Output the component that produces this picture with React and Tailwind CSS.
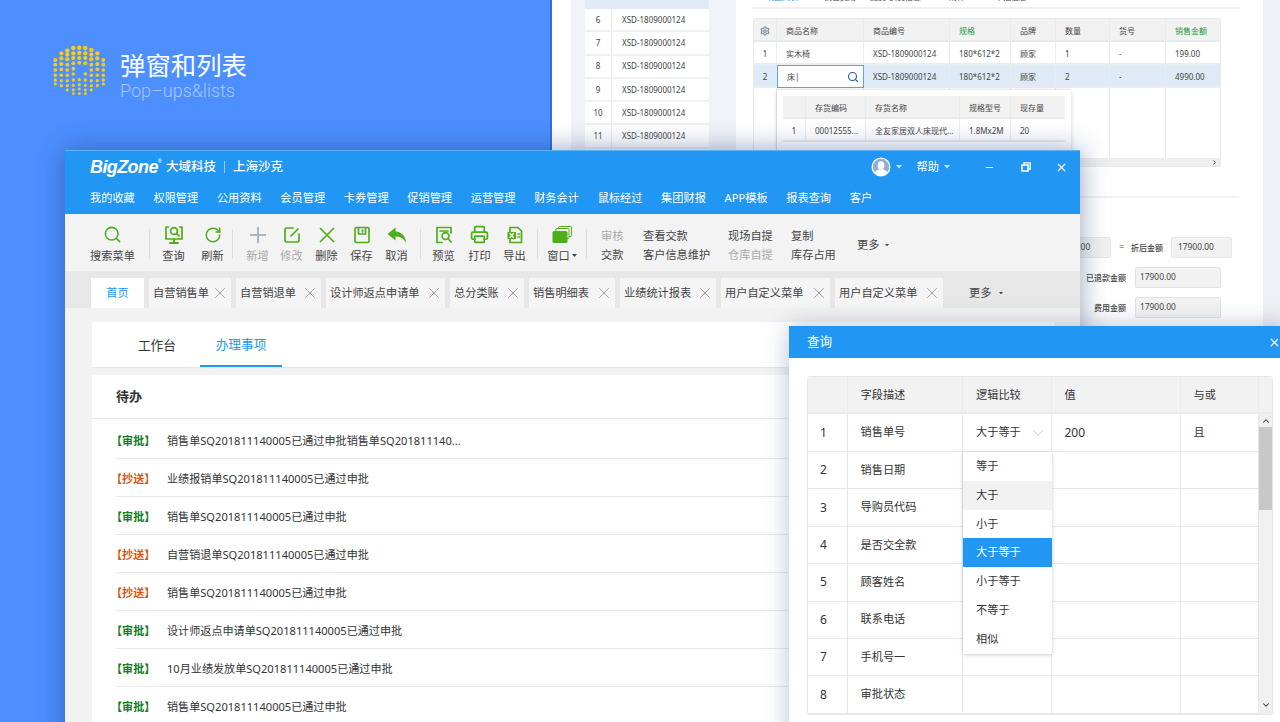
import { Search, RotateCw, Printer, X, Minus, ChevronUp, ChevronDown, ChevronRight, Settings } from "lucide-react";

const GREEN = "#4fad1a";

const LOGO_COLS = [
  [78, 92, 108, 124, 138, 150],
  [58, 73, 90, 106, 124, 140, 155],
  [50, 62, 76, 92, 108, 124, 140, 155, 168],
  [42, 58, 72, 88, 104, 120, 138, 154, 168, 179],
  [41, 57, 72, 86, 137, 152, 165, 179],
  [42, 58, 72, 88, 120, 138, 154, 168, 179],
  [48, 62, 76, 92, 108, 124, 140, 155, 168],
  [58, 73, 90, 106, 124, 140, 155],
  [78, 92, 108, 124, 138, 150],
];

const NAV = ["我的收藏", "权限管理", "公用资料", "会员管理", "卡券管理", "促销管理", "运营管理", "财务会计", "鼠标经过", "集团财报", "APP模板", "报表查询", "客户"];

const TABS = [
  { label: "自营销售单", w: "w-[82px]" },
  { label: "自营销退单", w: "w-[85px]" },
  { label: "设计师返点申请单", w: "w-[119px]" },
  { label: "总分类账", w: "w-[74px]" },
  { label: "销售明细表", w: "w-[86px]" },
  { label: "业绩统计报表", w: "w-[96px]" },
  { label: "用户自定义菜单", w: "w-[109px]" },
  { label: "用户自定义菜单", w: "w-[108px]" },
];

const TODOS = [
  { tag: "审批", text: "销售单SQ201811140005已通过申批销售单SQ201811140..." },
  { tag: "抄送", text: "业绩报销单SQ201811140005已通过申批" },
  { tag: "审批", text: "销售单SQ201811140005已通过申批" },
  { tag: "抄送", text: "自营销退单SQ201811140005已通过申批" },
  { tag: "抄送", text: "销售单SQ201811140005已通过申批" },
  { tag: "审批", text: "设计师返点申请单SQ201811140005已通过申批" },
  { tag: "审批", text: "10月业绩发放单SQ201811140005已通过申批" },
  { tag: "审批", text: "销售单SQ201811140005已通过申批" },
];

const FIELDS = ["销售单号", "销售日期", "导购员代码", "是否交全款", "顾客姓名", "联系电话", "手机号一", "审批状态"];

const OPTIONS = [
  { label: "等于" },
  { label: "大于", cls: "bg-[#f2f2f2]" },
  { label: "小于" },
  { label: "大于等于", cls: "bg-[#2196f3] text-white" },
  { label: "小于等于" },
  { label: "不等于" },
  { label: "相似" },
];

function Logo() {
  return (
    <svg width="54" height="54" viewBox="0 0 54 54" className="shrink-0">
      {LOGO_COLS.map((col, i) =>
        col.map((y) => (
          <circle key={i + "-" + y} cx={3.3 + i * 6} cy={y / 3 - 11} r={2.5 - (y / 180) * 1.1} fill="#ffcc00" />
        ))
      )}
    </svg>
  );
}

function Caret({ color = "#fff", size = 5 }) {
  return (
    <svg width={size} height={size * 0.6} viewBox="0 0 10 6" className="shrink-0">
      <polygon points="0,0 10,0 5,6" fill={color} />
    </svg>
  );
}

function G({ children, size = 20 }) {
  return (
    <svg width={size} height={size} viewBox="0 0 20 20" fill="none" stroke={GREEN} strokeWidth="1.7" strokeLinecap="round" strokeLinejoin="round">
      {children}
    </svg>
  );
}

const ICONS = {
  search: <Search size={19} color={GREEN} strokeWidth={2} />,
  query: (
    <G>
      <path d="M5 2H2v12h16V2h-3" strokeLinecap="butt" />
      <circle cx="10" cy="6" r="3.4" />
      <path d="M12.5 8.6l2.5 2.4" />
      <path d="M10 14v3M6 18h8" strokeWidth="2" />
    </G>
  ),
  refresh: <RotateCw size={18} color={GREEN} strokeWidth={2} />,
  add: (
    <svg width="18" height="18" viewBox="0 0 18 18">
      <path d="M9 1v16M1 9h16" stroke="#a9b5c4" strokeWidth="2" />
    </svg>
  ),
  edit: (
    <G>
      <path d="M11 3H4.5A1.5 1.5 0 0 0 3 4.500v11A1.500 1.500 0 0 0 4.500 17h11a1.500 1.500 0 0 0 1.500-1.500V9" />
      <path d="M9 11l7-7" />
    </G>
  ),
  del: (
    <svg width="18" height="18" viewBox="0 0 18 18">
      <path d="M2 2l14 14M16 2L2 16" stroke={GREEN} strokeWidth="1.6" />
    </svg>
  ),
  save: (
    <G>
      <rect x="3" y="2.500" width="14" height="15" rx="1.500" />
      <path d="M6.500 3v6h7V3" />
      <path d="M10.500 5v2" />
    </G>
  ),
  cancel: (
    <svg width="20" height="20" viewBox="0 0 20 20">
      <path d="M8.500 2.500L0.500 9l8 6.500v-4c4.500 0 8 1.500 10.500 6.500C19 11.500 15 7 8.500 6.500z" fill={GREEN} />
    </svg>
  ),
  preview: (
    <G>
      <path d="M17 8V2.500H3v15h5" />
      <circle cx="11.500" cy="11" r="3.400" />
      <path d="M14 13.500l3 3.500M6 6h8" />
    </G>
  ),
  print: <Printer size={19} color={GREEN} strokeWidth={2.2} />,
  excel: (
    <G>
      <path d="M5 7V2.500h8l3.500 3.500v11.500H5V14" />
      <rect x="2.500" y="7" width="8.500" height="7" fill={GREEN} stroke="none" />
      <path d="M5 8.500l3.500 4M8.500 8.500l-3.500 4" stroke="#fff" strokeWidth="1.200" />
      <path d="M13 9h1.500M13 12h1.500" />
    </G>
  ),
  win: (
    <svg width="20" height="20" viewBox="0 0 20 20">
      <rect x="6.500" y="1.500" width="13" height="10" rx="1" fill="none" stroke={GREEN} strokeWidth="1" />
      <rect x="4" y="3.500" width="13" height="10" rx="1" fill="#f3f3f3" stroke={GREEN} strokeWidth="1" />
      <rect x="0.500" y="6" width="15" height="12" rx="1.500" fill={GREEN} />
    </svg>
  ),
};

function Tool({ icon, label, w, muted }) {
  return (
    <div className={`flex flex-col items-center shrink-0 ${w}`}>
      <div className="h-[22px] flex items-center justify-center">{ICONS[icon]}</div>
      <span className={`mt-[2px] leading-[16px] whitespace-nowrap ${muted ? "text-[#aaaaaa]" : "text-[#444444]"}`}>{label}</span>
    </div>
  );
}

function Sep({ ml }) {
  return <div className={`w-px h-[30px] bg-[#dcdcdc] shrink-0 ${ml}`} />;
}

function TextCol({ w, top, bottom, topMuted, bottomMuted }) {
  return (
    <div className={`shrink-0 flex flex-col gap-[4px] mt-[3px] whitespace-nowrap ${w}`}>
      <span className={`leading-[15px] ${topMuted ? "text-[#aaaaaa]" : "text-[#444444]"}`}>{top}</span>
      <span className={`leading-[15px] ${bottomMuted ? "text-[#aaaaaa]" : "text-[#444444]"}`}>{bottom}</span>
    </div>
  );
}

function BackWindow() {
  const sideRows = [6, 7, 8, 9, 10, 11, 12];
  const headCell = "bg-[#f2f2f2] border-r border-b-2 border-[#e8ebee] flex items-center pl-[9px] pt-[2px] whitespace-nowrap";
  const bodyCell = "border-r border-b-2 border-[#eaedf0] flex items-center pl-[9px] pt-[2px] whitespace-nowrap";
  return (
    <div className="absolute left-[550px] top-0 w-[730px] h-[420px] flex bg-white text-[8px] text-[#444444] border-l-2 border-[#3570d8]">
      <div className="w-[19px] shrink-0" />
      <div className="w-[14px] shrink-0 bg-[#f1f3f8]" />
      <div className="w-[124px] shrink-0 bg-white">
        <div className="h-[9px] bg-[#dfebf6]" />
        {sideRows.map((n) => (
          <div key={n} className="h-[23.3px] flex border-b-2 border-[#eef0f3]">
            <div className="w-[27px] border-r border-[#eaedf0] flex items-center justify-center">{n}</div>
            <div className="pl-[10px] flex items-center">XSD-1809000124</div>
          </div>
        ))}
      </div>
      <div className="w-[27px] shrink-0 bg-[#f1f3f8]" />
      <div className="w-[527px] shrink-0 pl-[17px] pr-[24px]">
        <div className="h-[9px] border-b-2 border-[#eef0f3] flex overflow-hidden relative">
          <div className="absolute left-0 bottom-[-2px] w-[59px] h-[2px] bg-[#2196f3]" />
          <span className="ml-[13px] mt-[-9px] leading-[12px] text-[#2196f3]">明细列表</span>
          <span className="ml-[26px] mt-[-9px] leading-[12px]">销售费用</span>
          <span className="ml-[14px] mt-[-9px] leading-[12px]">退货/换货信息▾</span>
          <span className="ml-[24px] mt-[-9px] leading-[12px]">附件</span>
          <span className="ml-[30px] mt-[-9px] leading-[12px]">审批信息▾</span>
        </div>
        <div className="mt-[9px] w-[468px] relative border border-[#e8ebee] rounded-t-[2px]">
          <div className="grid grid-cols-[23px_87px_86px_61px_45px_54px_56px_54px] grid-rows-[23px_23px_23px_70px]">
            <div className={`${headCell} !pl-0 justify-center`}>
              <Settings size={10} color="#7f95ad" strokeWidth={3} />
            </div>
            <div className={headCell}>商品名称</div>
            <div className={headCell}>商品编号</div>
            <div className={`${headCell} text-[#1b9a3c]`}>规格</div>
            <div className={headCell}>品牌</div>
            <div className={headCell}>数量</div>
            <div className={headCell}>货号</div>
            <div className={`${headCell} text-[#1b9a3c] border-r-0`}>销售金额</div>

            <div className={`${bodyCell} !pl-0 justify-center`}>1</div>
            <div className={bodyCell}>实木椅</div>
            <div className={bodyCell}>XSD-1809000124</div>
            <div className={bodyCell}>180*612*2</div>
            <div className={bodyCell}>顾家</div>
            <div className={bodyCell}>1</div>
            <div className={bodyCell}>-</div>
            <div className={`${bodyCell} border-r-0`}>199.00</div>

            <div className={`${bodyCell} bg-[#deebf7] !pl-0 justify-center`}>2</div>
            <div className="bg-white border border-[#5ba6ea] flex items-center justify-between pl-[9px] pr-[4px]">
              <span>床|</span>
              <Search size={12} color="#1f5f9e" strokeWidth={2.2} />
            </div>
            <div className={`${bodyCell} bg-[#deebf7]`}>XSD-1809000124</div>
            <div className={`${bodyCell} bg-[#deebf7]`}>180*612*2</div>
            <div className={`${bodyCell} bg-[#deebf7]`}>顾家</div>
            <div className={`${bodyCell} bg-[#deebf7]`}>2</div>
            <div className={`${bodyCell} bg-[#deebf7]`}>-</div>
            <div className={`${bodyCell} bg-[#deebf7] border-r-0`}>4990.00</div>

            <div className="border-r border-[#eaedf0]" />
            <div className="border-r border-[#eaedf0]" />
            <div className="border-r border-[#eaedf0]" />
            <div className="border-r border-[#eaedf0]" />
            <div className="border-r border-[#eaedf0]" />
            <div className="border-r border-[#eaedf0]" />
            <div className="border-r border-[#eaedf0]" />
            <div />
          </div>
          <div className="h-[8px] bg-[#eeeeee] flex items-center justify-end pr-[2px]">
            <ChevronRight size={7} color="#333333" strokeWidth={3} />
          </div>
          <div className="absolute left-[23px] top-[71px] w-[294px] h-[70px] bg-white shadow-[0_0_4px_rgba(0,0,0,0.18)] p-[6px] pb-0">
            <div className="grid grid-cols-[23px_60px_94px_51px_54px] grid-rows-[23px_23px_23px]">
              <div className={headCell} />
              <div className={headCell}>存货编码</div>
              <div className={headCell}>存货名称</div>
              <div className={headCell}>规格型号</div>
              <div className={`${headCell} border-r-0`}>现存量</div>
              <div className={`${bodyCell} !pl-0 justify-center`}>1</div>
              <div className={bodyCell}>00012555...</div>
              <div className={bodyCell}>全友家居双人床现代...</div>
              <div className={bodyCell}>1.8Mx2M</div>
              <div className={`${bodyCell} border-r-0`}>20</div>
            </div>
          </div>
        </div>
        <div className="mt-[29px] w-[486px] h-[2px] bg-[#f0f1f3]" />
        <div className="mt-[39px] flex flex-col items-end gap-[9px] text-[8.4px]">
          <div className="flex items-center pr-[7px]">
            <div className="w-[70px] h-[21px] bg-[#f2f2f2] border border-[#e6e8eb] rounded-[2px] flex items-center justify-end pr-[20px]">17900.00</div>
            <span className="ml-[8px] mr-[7px]">=</span>
            <span className="mr-[8px] font-medium text-[8px]">折后金额</span>
            <div className="w-[61px] h-[21px] bg-[#f2f2f2] border border-[#e6e8eb] rounded-[2px] flex items-center pl-[6px]">17900.00</div>
          </div>
          <div className="flex items-center pr-[18px]">
            <span className="mr-[9px] font-medium text-[8px]">已退款金额</span>
            <div className="w-[86px] h-[21px] bg-[#f2f2f2] border border-[#dfe3e8] rounded-[2px] flex items-center pl-[4px]">17900.00</div>
          </div>
          <div className="flex items-center pr-[18px]">
            <span className="mr-[9px] font-medium text-[8px]">费用金额</span>
            <div className="w-[86px] h-[21px] bg-[#f2f2f2] border border-[#dfe3e8] rounded-[2px] flex items-center pl-[4px]">17900.00</div>
          </div>
        </div>
      </div>
      <div className="w-[17px] shrink-0 bg-[#eef0f4]" />
    </div>
  );
}

function MainWindow() {
  return (
    <div className="absolute left-[65px] top-[150px] w-[1015px] h-[600px] flex flex-col bg-[#f2f2f2] text-[11.2px] shadow-[0_0_26px_rgba(20,50,110,0.45)]">
      {/* Title and nav */}
      <div className="h-[64px] bg-[#2196f3] border-t border-[#5cb3f7] text-white shrink-0">
        <div className="h-[32px] flex items-center pl-[25px] pr-[12.5px]">
          <span className="font-['Liberation_Sans',sans-serif] font-bold italic text-[18px] tracking-[-0.6px] leading-none">BigZone</span>
          <span className="text-[5px] mb-[10px]">®</span>
          <span className="ml-[4px] text-[12.5px] font-medium">大域科技</span>
          <span className="mx-[8px] w-px h-[12px] bg-white/50" />
          <span className="text-[12.5px] font-medium">上海沙克</span>
          <svg width="20" height="20" viewBox="0 0 20 20" className="ml-[auto] shrink-0">
            <circle cx="10" cy="10" r="9.500" fill="#fff" />
            <circle cx="10" cy="10" r="8.200" fill="#8eb0d0" />
            <ellipse cx="10" cy="8.500" rx="3.300" ry="4.200" fill="#fff" />
            <path d="M3.500 15.500c1.500-2.500 4-3 6.500-3s5 .5 6.500 3a8 8 0 0 1-13 0z" fill="#fff" />
          </svg>
          <span className="ml-[5px]"><Caret color="#cfe6fb" size={6} /></span>
          <span className="ml-[15px]">帮助</span>
          <span className="ml-[5px]"><Caret color="#cfe6fb" size={6} /></span>
          <Minus size={11} strokeWidth={2} className="ml-[33.5px]" />
          <svg width="10" height="10" viewBox="0 0 10 10" className="ml-[26.5px]">
            <path d="M3 2.500V.8h6.200v6.200H7.500" fill="none" stroke="#fff" strokeWidth="1.300" />
            <rect x="1" y="3" width="6" height="6" fill="none" stroke="#fff" strokeWidth="1.500" />
          </svg>
          <X size={13} strokeWidth={2} className="ml-[23.5px]" />
        </div>
        <div className="flex gap-[18.7px] pl-[25px] h-[31px] items-center">
          {NAV.map((n) => (
            <span key={n} className="whitespace-nowrap">{n}</span>
          ))}
        </div>
      </div>

      {/* Toolbar */}
      <div className="h-[57px] bg-[#f3f3f3] flex items-center pl-[25px] shrink-0 pt-[2px]">
        <Tool icon="search" label="搜索菜单" w="w-[45px]" />
        <Sep ml="ml-[14px]" />
        <Tool icon="query" label="查询" w="w-[23px] ml-[12px]" />
        <Tool icon="refresh" label="刷新" w="w-[23px] ml-[16px]" />
        <Sep ml="ml-[8px]" />
        <Tool icon="add" label="新增" w="w-[23px] ml-[13px]" muted />
        <Tool icon="edit" label="修改" w="w-[23px] ml-[11px]" muted />
        <Tool icon="del" label="删除" w="w-[23px] ml-[12px]" />
        <Tool icon="save" label="保存" w="w-[23px] ml-[12px]" />
        <Tool icon="cancel" label="取消" w="w-[23px] ml-[12px]" />
        <Sep ml="ml-[12px]" />
        <Tool icon="preview" label="预览" w="w-[23px] ml-[11px]" />
        <Tool icon="print" label="打印" w="w-[23px] ml-[13px]" />
        <Tool icon="excel" label="导出" w="w-[23px] ml-[12px]" />
        <Sep ml="ml-[11px]" />
        <div className="flex flex-col items-center shrink-0 w-[30px] ml-[9px]">
          <div className="h-[22px] flex items-center justify-center">{ICONS.win}</div>
          <span className="mt-[2px] leading-[16px] text-[#444444] flex items-center gap-[2px] whitespace-nowrap">窗口<Caret color="#444444" size={5} /></span>
        </div>
        <Sep ml="ml-[9px]" />
        <TextCol w="w-[24px] ml-[14px]" top="审核" bottom="交款" topMuted />
        <TextCol w="w-[85px] ml-[18px]" top="查看交款" bottom="客户信息维护" />
        <TextCol w="w-[63px]" top="现场自提" bottom="仓库自提" bottomMuted />
        <TextCol w="w-[66px]" top="复制" bottom="库存占用" />
        <span className="text-[#444444] whitespace-nowrap mt-[3px]">更多</span>
        <span className="ml-[6px] mt-[3px]"><Caret color="#444444" size={4} /></span>
      </div>

      {/* Tabs */}
      <div className="h-[37px] bg-[#e7e7e7] flex items-end pl-[26px] shrink-0 text-[#444444]">
        <div className="w-[53px] h-[30px] bg-white text-[#2196f3] flex items-center justify-center">首页</div>
        {TABS.map((t, i) => (
          <div key={i} className={`h-[30px] ml-[5px] bg-[#f5f5f5] flex items-center justify-between pl-[4px] pr-[2px] ${t.w}`}>
            <span className="whitespace-nowrap">{t.label}</span>
            <X size={18} color="#8a8a8a" strokeWidth={1.1} />
          </div>
        ))}
        <div className="h-[30px] ml-[26px] flex items-center">
          <span>更多</span>
          <span className="ml-[8px]"><Caret color="#444444" size={4} /></span>
        </div>
      </div>

      {/* Content */}
      <div className="flex-1 pl-[27px] pr-[25px] pt-[14px]">
        <div className="h-[46px] bg-white flex text-[12.7px] border-b border-[#e6e6e6]">
          <div className="w-[108px] flex items-center justify-end pr-[24px] pt-[2px] text-[#333333]">工作台</div>
          <div className="w-[82px] flex items-center justify-center pt-[2px] text-[#2196f3] border-b-2 border-[#2196f3]">办理事项</div>
        </div>
        <div className="mt-[7px] bg-white pb-[20px]">
          <div className="h-[44px] flex items-center pl-[24px] border-b border-[#e8e8e8] text-[13px] font-bold text-[#333333]">待办</div>
          <div className="pl-[24px] pt-[1.5px]">
            {TODOS.map((t, i) => (
              <div key={i} className="h-[38px] flex items-center pt-[5px] border-b border-[#e8e8e8] whitespace-nowrap text-[11.1px]">
                <span className={`w-[51px] font-bold shrink-0 ml-[-5px] mr-[5px] ${t.tag === "审批" ? "text-[#0f7d1c]" : "text-[#d9540c]"}`}>【{t.tag}】</span>
                <span className="text-[#333333]">{t.text}</span>
              </div>
            ))}
          </div>
        </div>
      </div>
    </div>
  );
}

function QueryDialog() {
  const head = "bg-[#f2f2f2] border-r border-b-2 border-[#e9ecee] flex items-center pl-[13px] pt-[2px]";
  const cell = "border-r border-b border-[#e4e8ec] flex items-center pl-[13px]";
  return (
    <div className="absolute left-[789px] top-[326px] w-[500px] h-[420px] bg-white shadow-[0_0_22px_rgba(20,50,110,0.3)] text-[11.2px] text-[#333333]">
      <div className="h-[32px] bg-[#2196f3] text-white flex items-center justify-between pl-[18px] pr-[8px] pt-[1px] text-[12.6px]">
        <span>查询</span>
        <X size={13} strokeWidth={2.2} />
      </div>
      <div className="mt-[18px] ml-[18px] w-[466px] flex border border-[#e4e8ec] rounded-[3px] relative">
        <div className="grid grid-cols-[39.5px_115.5px_88.5px_129px_78.5px] grid-rows-[37px_38px_37.4px_37.4px_37.4px_37.4px_37.4px_37.4px_37.4px] flex-1">
          <div className={head} />
          <div className={head}>字段描述</div>
          <div className={head}>逻辑比较</div>
          <div className={head}>值</div>
          <div className={head}>与或</div>
          {FIELDS.map((f, i) => (
            <div key={f} className="contents">
              <div className={`${cell} text-[12px] !pl-[12px]`}>{i + 1}</div>
              <div className={cell}>{f}</div>
              <div className={`${cell} justify-between pr-[4px]`}>
                {i === 0 && (
                  <>
                    <span>大于等于</span>
                    <ChevronDown size={18} color="#aab0b6" strokeWidth={0.9} />
                  </>
                )}
              </div>
              <div className={`${cell} text-[12px]`}>{i === 0 ? "200" : ""}</div>
              <div className={cell}>{i === 0 ? "且" : ""}</div>
            </div>
          ))}
        </div>
        <div className="w-[13px] shrink-0 flex flex-col">
          <div className="h-[37px] bg-[#f2f2f2] border-b-2 border-[#e9ecee]" />
          <div className="flex-1 bg-[#f0f0f0] flex flex-col items-center">
            <ChevronUp size={10} color="#333333" strokeWidth={2.5} className="my-[1.5px]" />
            <div className="w-full h-[83px] bg-[#c8c8c8]" />
            <ChevronDown size={10} color="#333333" strokeWidth={2.5} className="mt-auto mb-[4px]" />
          </div>
        </div>
        <div className="absolute left-[155px] top-[75px] w-[88.5px] bg-white shadow-[0_1px_4px_rgba(60,80,100,0.28)] flex flex-col">
          {OPTIONS.map((o) => (
            <div key={o.label} className={`h-[28.8px] flex items-center pl-[13px] ${o.cls || ""}`}>{o.label}</div>
          ))}
        </div>
      </div>
    </div>
  );
}

export default function App() {
  return (
    <div className="relative w-[1280px] h-[722px] overflow-hidden bg-[#4d8fff] font-['Noto_Sans','Noto_Sans_CJK_SC',sans-serif]">
      <div className="flex items-start pl-[52px] pt-[45px] gap-[14px]">
        <Logo />
        <div className="flex flex-col">
          <span className="text-[25.4px] leading-[38px] text-white font-['Noto_Sans_CJK_SC',sans-serif]">弹窗和列表</span>
          <span className="text-[18px] leading-[22px] mt-[-3px] text-white/50 font-['Roboto',sans-serif] font-light">Pop–ups&lists</span>
        </div>
      </div>
      <BackWindow />
      <MainWindow />
      <QueryDialog />
    </div>
  );
}
